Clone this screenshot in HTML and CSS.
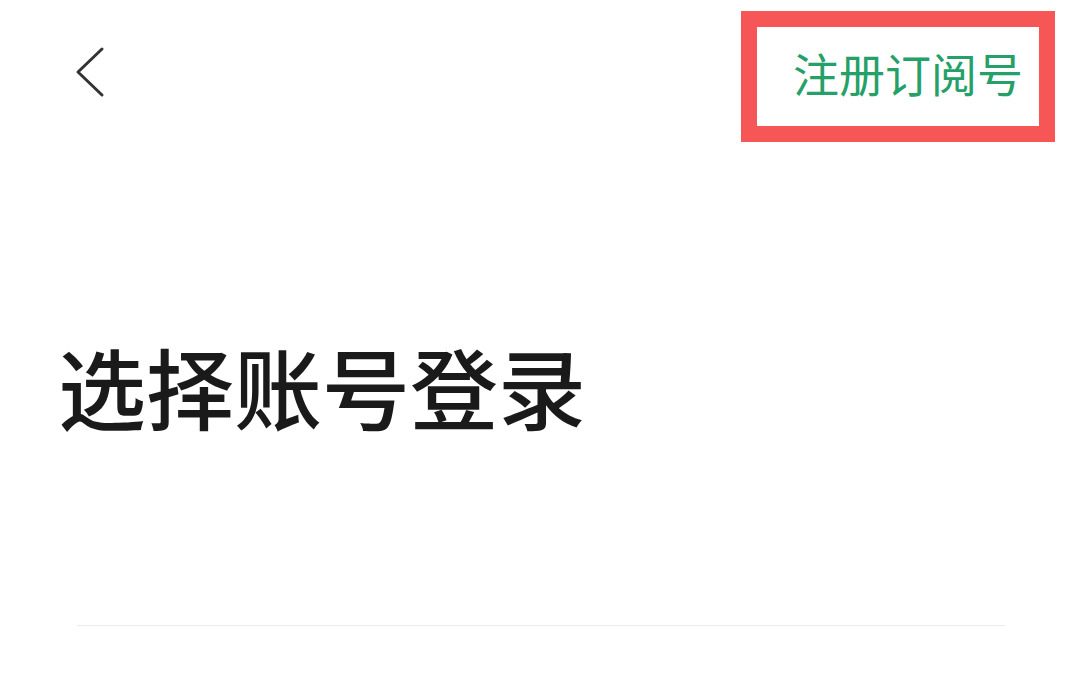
FILE: index.html
```html
<!DOCTYPE html>
<html lang="zh-CN">
<head>
<meta charset="utf-8">
<title>选择账号登录</title>
<link rel="stylesheet" href="styles.css">
</head>
<body>
<div class="page">
  <header class="topbar">
    <svg class="back" width="30" height="52" viewBox="0 0 30 52" aria-label="返回">
      <polyline points="27,3 3,26 27,49" fill="none" stroke="#333" stroke-width="3" stroke-linecap="round" stroke-linejoin="round"/>
    </svg>
    <div class="register">注册订阅号</div>
  </header>
  <h1 class="title">选择账号登录</h1>
  <div class="divider"></div>
</div>
</body>
</html>
```

FILE: styles.css
```css
html, body {
  margin: 0;
  padding: 0;
  background: #ffffff;
}
body {
  font-family: "Noto Sans CJK SC", "Noto Sans", sans-serif;
  width: 1080px;
  height: 675px;
  overflow: hidden;
}
.topbar {
  display: flex;
  justify-content: space-between;
  align-items: flex-start;
  padding: 11px 25px 0 75px;
}
.back {
  display: block;
  margin-top: 35px;
}
.register {
  border: 16px solid #f65656;
  padding: 0 16px 8px 36px;
  height: 91px;
  line-height: 91px;
  font-size: 46px;
  color: #24a068;
  white-space: nowrap;
}
.title {
  margin: 199px 0 0 0;
  padding-left: 58px;
  font-size: 88px;
  line-height: 88px;
  font-weight: 500;
  color: #1a1a1a;
}
.divider {
  margin: 196px 75px 0 77px;
  height: 1px;
  background: #ececec;
}
```
